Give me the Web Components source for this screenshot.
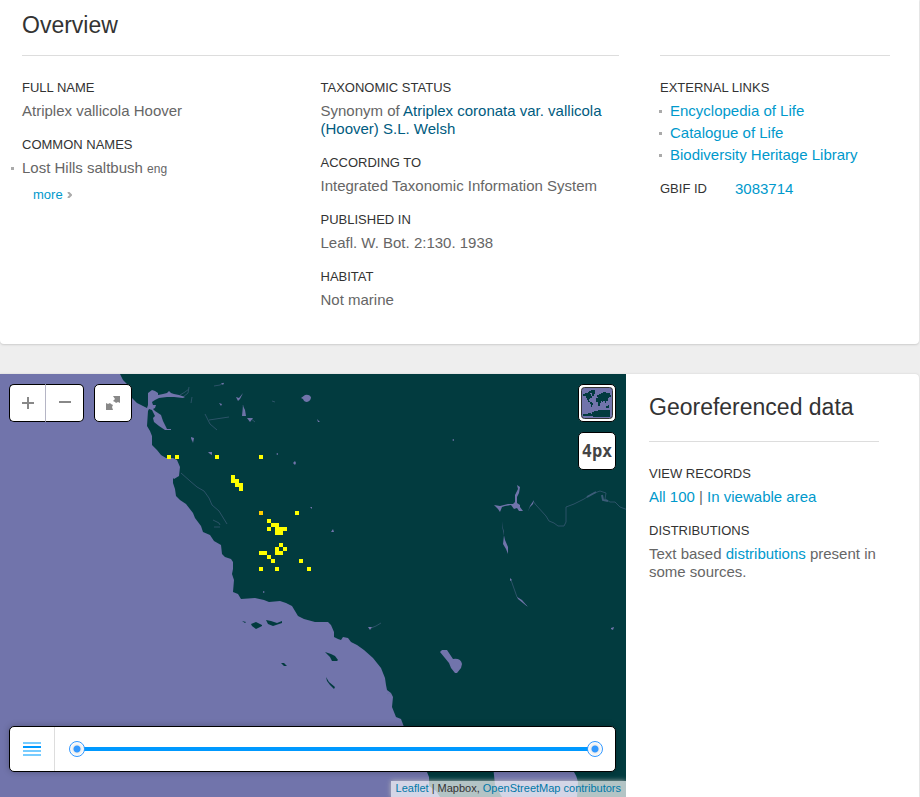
<!DOCTYPE html>
<html lang="en">
<head>
<meta charset="utf-8">
<title>Atriplex vallicola Hoover</title>
<style>
html, body { margin: 0; }
body { background: #eee; font: 15px/18px "Liberation Sans", Arial, sans-serif; color: #666; }
</style>
</head>
<body>
<species-page></species-page>
<script>
function define(name, html, setup) {
  const template = document.createElement('template');
  template.innerHTML = html;
  customElements.define(name, class extends HTMLElement {
    constructor() {
      super();
      this.attachShadow({ mode: 'open' }).append(template.content.cloneNode(true));
    }
    connectedCallback() { if (setup) setup(this); }
  });
}

define('info-block', `
<style>
:host { display: block; margin-bottom: 15px; }
h3 { margin: 0 0 4px; font-size: 13px; line-height: 20px; font-weight: 400; color: #333; text-transform: uppercase; }
::slotted(a) { color: #09c; text-decoration: none; }
</style>
<h3></h3><slot></slot>`, el => {
  el.shadowRoot.querySelector('h3').textContent = el.getAttribute('heading');
});

define('bullet-list', `
<style>
:host { display: grid; gap: 4px; }
</style>
<slot></slot>`, el => el.setAttribute('role', 'list'));

define('bullet-item', `
<style>
:host { display: block; position: relative; }
:host::before { content: ""; position: absolute; left: -11px; top: 8px; width: 3px; height: 3px; background: #aaa; }
::slotted(a) { color: #09c; text-decoration: none; }
::slotted(small) { font-size: 12px; }
</style>
<slot></slot>`, el => el.setAttribute('role', 'listitem'));

define('overview-card', `
<style>
:host { display: grid; grid-template-columns: minmax(0, 1fr) 230px; column-gap: 41px; margin-right: 1px; padding: 10px 29px 20px 22px;
  background: #fff; border-radius: 0 0 4px 4px; box-shadow: 0 1px 2px #ccc; box-sizing: border-box; }
h2 { margin: 0; height: 30px; padding-bottom: 15px; font-size: 23px; line-height: 30px; font-weight: 400; color: #333; }
.cols { display: grid; grid-template-columns: 1fr 1fr; border-top: 1px solid #ddd; padding-top: 22px; }
aside { border-top: 1px solid #ddd; margin-top: 45px; padding-top: 22px; }
a { color: #09c; text-decoration: none; }
a.strong { color: #005b80; }
.more { display: inline-flex; align-items: center; gap: 4px; margin: 8px 0 0 11px; font-size: 13px; }
.links { margin-left: 10px; }
.id { display: flex; gap: 28px; margin: 0; padding-top: 1px; }
dt { font-size: 13px; color: #333; }
dd { margin: 0; }
</style>
<section>
  <h2>Overview</h2>
  <div class="cols">
    <div>
      <info-block heading="Full name">Atriplex vallicola Hoover</info-block>
      <info-block heading="Common names">
        <bullet-list><bullet-item>Lost Hills saltbush <small>eng</small></bullet-item></bullet-list>
        <a class="more" href="#names">more <svg width="5" height="6" viewBox="0 0 5 6" aria-hidden="true"><path d="M1 0l3 3-3 3" fill="none" stroke="#aaa" stroke-width="2"/></svg></a>
      </info-block>
    </div>
    <div>
      <info-block heading="Taxonomic status">Synonym of <a class="strong" href="#accepted">Atriplex coronata var. vallicola (Hoover) S.L. Welsh</a></info-block>
      <info-block heading="According to">Integrated Taxonomic Information System</info-block>
      <info-block heading="Published in">Leafl. W. Bot. 2:130. 1938</info-block>
      <info-block heading="Habitat">Not marine</info-block>
    </div>
  </div>
</section>
<aside>
  <info-block heading="External Links">
    <bullet-list class="links">
      <bullet-item><a href="#eol">Encyclopedia of Life</a></bullet-item>
      <bullet-item><a href="#col">Catalogue of Life</a></bullet-item>
      <bullet-item><a href="#bhl">Biodiversity Heritage Library</a></bullet-item>
    </bullet-list>
  </info-block>
  <dl class="id"><dt>GBIF ID</dt><dd><a href="#id">3083714</a></dd></dl>
</aside>`);

define('map-button', `
<style>
:host { display: block; width: 38px; height: 38px; }
:host([side="left"]) { width: 37px; }
button { display: grid; place-items: center; width: 100%; height: 100%; padding: 0; box-sizing: border-box;
  background: #fff; border: 1px solid #000; border-radius: 5px; font: bold 17px/20px "DejaVu Sans Mono", monospace; color: #444; }
:host([side="left"]) button { border-right: 1px solid #b5b5c5; border-radius: 5px 0 0 5px; }
:host([side="right"]) button { border-left: 0; border-radius: 0 5px 5px 0; }
</style>
<button type="button"><slot></slot></button>`, el => {
  el.shadowRoot.querySelector('button').setAttribute('aria-label', el.getAttribute('label'));
});

define('year-slider', `
<style>
:host { display: flex; height: 46px; box-sizing: border-box; background: #fff; border: 1px solid #000; border-radius: 5px; box-shadow: 0 0 6px rgba(0,0,0,.25); }
button { width: 45px; padding: 0; border: 0; border-right: 1px solid #ddd; background: none; display: grid; place-items: center; }
.range { flex: 1; display: grid; align-items: center; margin: 0 12px 0 14px; }
.range::before { content: ""; grid-area: 1 / 1; height: 4px; margin: 0 8px; background: #09f; }
input { grid-area: 1 / 1; width: 100%; height: 16px; margin: 0; appearance: none; -webkit-appearance: none; background: none; pointer-events: none; }
input::-webkit-slider-thumb { -webkit-appearance: none; width: 16px; height: 16px; box-sizing: border-box; border: 1px solid #39f; border-radius: 50%;
  background: radial-gradient(circle, #39f 0 3px, #eee 4px, #fff 7px); pointer-events: auto; }
</style>
<button type="button" aria-label="Options"><svg width="18" height="14"><path d="M0 1h18M0 9h18M0 13h18" stroke="#7cf" stroke-width="2"/><path d="M0 5h18" stroke="#09f" stroke-width="2"/></svg></button>
<div class="range"><input type="range" aria-label="From year" value="0"><input type="range" aria-label="To year" value="100"></div>`);

define('occurrence-map', `
<style>
:host { display: grid; position: relative; overflow: hidden; background: #023b3f; box-sizing: border-box; padding: 10px 10px 0 9px;
  grid-template-rows: 1fr auto auto; min-height: 423px; }
.canvas { position: absolute; left: 0; top: 0; width: 100%; height: 100%; }
.controls { position: relative; display: flex; align-items: flex-start; justify-content: space-between; }
.left { display: flex; }
.full { margin-left: 10px; }
.right { display: grid; gap: 10px; }
.controls svg { display: block; }
year-slider { position: relative; margin-bottom: 9px; }
footer { position: relative; justify-self: end; margin-right: -10px; padding: 0 5px 2px; font-size: 11px; line-height: 14px; background: rgba(255,255,255,.7); box-shadow: 0 0 5px #bbb; color: #333; }
footer a { color: #0078a8; text-decoration: none; }
</style>
<svg class="canvas" viewBox="0 374 626 423" preserveAspectRatio="xMinYMin slice" aria-hidden="true">
  <g fill="#7174ab">
    <path d="M0 374H120L123 380 128 385 131 390 132 398 137 403 141 405 147 408 148 405 148 393 152 390 155 391 158 393 158 395 163 394 167 393 169 391 171 393 174 394 179 395 185 397 183 398 174 397 167 397 159 398 155 400 152 402 153 405 156 405 155 408 153 409 155 411 158 413 161 415 163 421 165 425 167 429 171 429 171 430 165 430 159 426 154 422 153 418 155 416 152 410 149 409 148 411 147 426 150 431 152 436 152 445 157 450 161 455 166 458 173 458 177 460 180 467 179 476 174 479 173 478 173 483 175 489 176 496 180 500 186 504 193 513 195 518 201 526 203 532 210 535 214 541 221 545 222 554 225 557 231 559 233 562 233 569 232 574 234 580 233 592 238 594 241 599 255 598 264 600 269 602 280 601 286 603 292 606 295 611 298 616 304 619 315 622 328 622 331 625 334 632 334 637 338 639 341 640 343 637 348 638 351 642 357 645 364 650 373 658 381 668 385 678 386 685 387 690 391 693 393 697 392 707 396 717 401 719 404 727 420 765 427 772 429 777 429 786 436 791 440 797H0z"/>
    <path d="M493 765H565Q576 770 578 782L577 797H502L495 785z"/>
    <path d="M301 398L305 395Q309 394 311 397Q311 401 307 402Q304 402 303 399z"/>
    <path d="M440 652L442 650 447 650 453 659 Q461 658 462 664L461 668 457 673 455 673 451 668 449 663z"/>
    <path d="M494 505L500 506 508 504 513 504 515 502 515 495 518 489 517 485 520 487 519 493 517 497 517 503 520 505 520 507 523 511 519 511 517 508 514 509 511 505 505 506 502 507 500 512 498 509zM528 511L530 506 534 500 533 504 530 507z"/>
    <path d="M502 521L503 531 505 540 508 547 508 554 506 549 503 544 504 535zM510 578L512 580 510 581zM517 597L522 600 528 607 518 599z"/>
    <path d="M236 397L239 398 243 393 240 399 238 401zM243 406L245 410 246 416 242 416zM247 418L253 418 250 422zM208 452L212 452 212 455 210 454zM191 437L193 439 192 441z"/>
    <path d="M191 437l3 1-1 5zM219 403l3 1-1 2zM221 383l3 0-1 2zM317 419l3 3-2 0zM276 454l2-1v2zM293 463l2-2 1 2-1 2zM452 440l2-1v2zM310 507l2 0 0 2zM331 532l2-3 1 3zM368 627l4 0-2 3zM611 628l3-1-1 3-2-1zM263 591l2 1-2 1zM191 437zM191 437zM190 437z"/>
  </g>
  <g fill="none" stroke="#5f709a" stroke-width="1" opacity=".45">
    <path d="M180 395l5-3 4-3M183 397l5-4 1-6M192 397l-1 6M214 386l6-1 4-2M243 405l1 10M250 418l5 4M272 401l3 1"/>
    <path d="M205 414l5 10 7 6M209 420l20-3M181 473l9 8 7 6 7 4 5 7 3 7 7 6 8 13M213 520l6 3 1 2M214 527l6 0M371 628l5-2 5-3M511 580l6 17 10 9"/>
    <path d="M533 501l3 4 10 11 3 5 5 2 4 3 6 0 2-4v-15l8-3 10-5 8-5 8-3 6 2-1 6 5 3 5 0 5 5 8 3"/>
    <path d="M587 497l9-5M602 495l1 5 5 1" stroke="#8285bd" stroke-width="2"/>
    <path d="M387 694l2-1 2 1"/>
  </g>
  <g fill="#023b3f">
    <path d="M242 621l4 1-1 1zM251 624L256 622 262 625 262 626 256 629 252 626zM266 620L271 621 277 623 282 621 282 623 273 626 268 624zM281 663l3 0 3 3-3 0zM325 652L331 654 335 656 338 660 337 661 332 661 330 657zM326 677L329 682 335 687 334 689 330 685 327 681z"/>
  </g>
  <path fill="#ff0" shape-rendering="crispEdges" d="M167 455h4v4h-4zM175 455h4v4h-4zM215 455h4v4h-4zM259 455h4v4h-4zM231 475h4v4h4v4h4v8h-4v-4h-4v-4h-4zM295 511h4v4h-4zM267 519h4v4h8v4h8v4h-4v4h-8v-8h-4v-4h-4zM267 527h4v4h-4zM279 543h4v4h4v4h-4v4h-8v-8h4v4h4v-4h-4zM259 551h8v4h-8zM267 555h4v4h-4zM271 559h4v4h-4zM299 559h4v4h-4zM259 567h4v4h-4zM275 567h4v4h-4zM307 567h4v4h-4z"/>
  <path fill="#fc0" d="M259 511h4v4h-4z"/>
</svg>
<div class="controls">
  <div class="left">
    <map-button side="left" label="Zoom in"><svg width="12" height="12"><path d="M6 0v12M0 6h12" stroke="#888" stroke-width="2"/></svg></map-button>
    <map-button side="right" label="Zoom out"><svg width="12" height="12"><path d="M0 5h12" stroke="#888" stroke-width="2"/></svg></map-button>
    <map-button class="full" label="Full screen"><svg width="16" height="16"><path fill="#888" d="M8 1h7v7l-2-1-2 1-1-1-2-1 2-2zM1 8l2 1 2-1 1 1 2 1-1 2 1 3H1z"/></svg></map-button>
  </div>
  <div class="right">
    <map-button label="Base map"><svg width="32" height="32" viewBox="0 0 32 32"><rect x=".5" y=".5" width="31" height="31" rx="3" fill="#7174ab" stroke="#333"/><path fill="#023b3f" shape-rendering="crispEdges" d="M2 7h2V6h3V5h2v2h1v2h1v2H9v1H8v2h1v1H7v-2H6v-2H5V9H2zM8 4h2V3h4v4h-1v2h-2V6H9zM9 15h2v1h1v2h-1v2h-1v-3H9zM15 11h2v-1h-1V8h2V7h2V6h2V5h3v1h4v2h1v2h-2v1h-1v3h-2v2h-1v-2h-2v1h-1v-1h-1v2h-1v3h-2v-4h-2zM25 19h2v-1h1v3h-3zM2 28v-1h5v-1h3v1h1v-2h2v-1h4v-1h12v7H12v-1H2z"/></svg></map-button>
    <map-button label="Pixel size 4px">4px</map-button>
  </div>
</div>
<year-slider></year-slider>
<footer><a href="#leaflet">Leaflet</a> | Mapbox, <a href="#osm">OpenStreetMap contributors</a></footer>`);

define('georeference-card', `
<style>
:host { display: grid; grid-template-columns: minmax(0, 1fr) 293px; margin-right: 1px; background: #fff; border-radius: 0 4px 0 0; box-shadow: 0 0 2px #ccc; }
section { padding: 18px 40px 0 23px; }
h2 { margin: 0 0 22px; padding-bottom: 19px; border-bottom: 1px solid #ddd; font-size: 23px; line-height: 30px; font-weight: 400; color: #333; }
</style>
<occurrence-map></occurrence-map>
<section>
  <h2>Georeferenced data</h2>
  <info-block heading="View records"><a href="#all">All 100</a> | <a href="#area">In viewable area</a></info-block>
  <info-block heading="Distributions">Text based <a href="#distributions">distributions</a> present in some sources.</info-block>
</section>`);

define('species-page', `
<style>
:host { display: grid; grid-template-rows: auto 1fr; gap: 30px; min-height: 100vh; }
</style>
<overview-card></overview-card>
<georeference-card></georeference-card>`);
</script>
</body>
</html>
